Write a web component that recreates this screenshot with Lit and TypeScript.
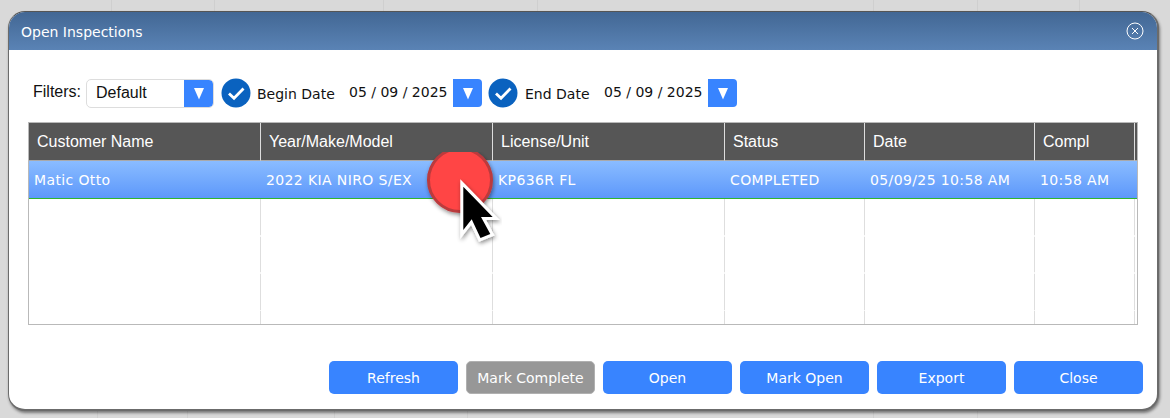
import { LitElement, html, css, svg } from "lit";
import { customElement } from "lit/decorators.js";

const COLS = [
  { name: "Customer Name", val: "Matic Otto" },
  { name: "Year/Make/Model", val: "2022 KIA NIRO S/EX" },
  { name: "License/Unit", val: "KP636R FL" },
  { name: "Status", val: "COMPLETED" },
  { name: "Date", val: "05/09/25 10:58 AM" },
  { name: "Compl", val: "10:58 AM" },
  { name: "", val: "" },
];
const BUTTONS = ["Refresh", "Mark Complete", "Open", "Mark Open", "Export", "Close"];
const check = svg`<svg class="check" width="30" height="30" viewBox="0 0 30 30"><circle cx="15" cy="15" r="14.5" fill="#0a62bf"/><path d="M8 15.5l5 4.8L22.5 10.5" fill="none" stroke="#fff" stroke-width="2.8"/></svg>`;

@customElement("app-root")
export class AppRoot extends LitElement {
  static styles = css`
    :host { display: block; width: 1170px; height: 418px; box-sizing: border-box; padding: 11px 11px 7px 8px; overflow: hidden; position: relative;
      background-color: #d9d9d9;
      font-family: "DejaVu Sans", sans-serif; }
    .bgline { position: absolute; width: 1px; background: #cfcfcf; }
    .top { top: 0; height: 11px; }
    .bot { top: 410px; height: 8px; }
    .modal { position: relative; box-sizing: border-box; height: 400px; background: #fff; border-radius: 17px; border: 1px solid #6b6b6b; border-top-color: #555; border-width: 1px 2px 2px 1px;
      box-shadow: 1px 2px 3px rgba(0,0,0,.45); overflow: hidden; display: flex; flex-direction: column; }
    .head { height: 38px; flex: none; box-sizing: border-box; padding: 0 13px 0 12px; display: flex; align-items: center; justify-content: space-between; background: linear-gradient(#426794, #5a83b5); color: #fff; font-size: 14px; }
    .title { position: relative; top: 1px; }
    .filters { display: flex; align-items: center; height: 30px; margin: 28px 0 0 24px; font-size: 14px; color: #111; }
    .flabel { font: 16px "Liberation Sans", sans-serif; width: 53px; flex: none; position: relative; top: -1px; color: #111; white-space: nowrap; }
    .select { box-sizing: border-box; width: 128px; height: 29px; border: 1px solid #ddd; border-radius: 5px; display: flex; justify-content: space-between; font: 16px "Liberation Sans", sans-serif; overflow: hidden; margin-right: 7px; flex: none; }
    .select span { padding: 4px 0 0 9px; }
    .drop { width: 29px; height: 28px; flex: none; background: #3884ff; display: flex; align-items: center; justify-content: center; border-radius: 0 4px 4px 0; }
    .select .drop { height: 27px; }
    .check { display: block; flex: none; margin-right: 6px; }
    .lbl { position: relative; top: 1px; white-space: nowrap; flex: none; }
    .l1 { width: 92px; }
    .l2 { width: 80px; padding-left: 1px; box-sizing: border-box; }
    .date { width: 104px; flex: none; position: relative; top: -1px; white-space: nowrap; }
    .drop.d2 { margin-right: 6px; }
    .table { position: relative; box-sizing: border-box; width: 1110px; height: 203px; margin: 14px 0 0 19px; border: 1px solid #b9b9b9; display: grid; grid-template-columns: 232px 232px 232px 140px 170px 100px 2px; grid-template-rows: 38px 38px 1fr; }
    .th { background: #565656; color: #fff; font: 16px "Liberation Sans", sans-serif; padding: 10px 0 0 8px; box-sizing: border-box; border-right: 1px solid #ddd; white-space: nowrap; overflow: hidden; border-bottom: 1px solid #a9a9a9; min-width: 0; }
    .th.end { border-right: none; padding: 0; }
    .td { background: linear-gradient(#8abcff, #5d98fb); color: #fff; font-size: 14px; letter-spacing: .38px; padding: 11px 0 0 5px; box-sizing: border-box; border-bottom: 1px solid #2fb52f; white-space: nowrap; min-width: 0; overflow: hidden; }
    .td.end { padding: 0; }
    .cell { background: repeating-linear-gradient(#dedede 0 36px, #f6f6f6 36px 37.5px) right top / 1px 100% no-repeat; }
    .cell.end { background: none; }
    .foot { display: flex; justify-content: flex-end; gap: 8px; margin: 36px 14px 0 0; }
    .btn { box-sizing: border-box; width: 129px; height: 33px; background: #3884ff; border-radius: 5px; color: #fff; font-size: 14px; display: flex; align-items: center; justify-content: center; }
    .btn.off { background: #979797; border: 1px solid #b0b0b0; color: #fff; }
    .cursor { position: absolute; left: 420px; top: 152px; }
  `;

  private drop(cls = "") {
    return html`<div class="drop ${cls}"><svg width="12" height="13" viewBox="0 0 12 13"><path d="M1 1h10L6 12.5z" fill="#fff"/></svg></div>`;
  }

  render() {
    const lefts = [111, 214, 383, 537, 873, 977, 1079];
    const botLefts = [97, 187, 334, 467, 873, 977];
    return html`
      ${lefts.map((x) => html`<div class="bgline top" style="left:${x}px"></div>`)}
      ${botLefts.map((x) => html`<div class="bgline bot" style="left:${x}px"></div>`)}
      <div class="modal">
        <div class="head">
          <span class="title">Open Inspections</span>
          <svg width="18" height="18" viewBox="0 0 18 18"><circle cx="9" cy="9" r="8" fill="none" stroke="#fff" stroke-width="1"/><path d="M6 6l6 6M12 6l-6 6" stroke="#fff" stroke-width="1"/></svg>
        </div>
        <div class="filters">
          <span class="flabel">Filters:</span>
          <div class="select"><span>Default</span>${this.drop()}</div>
          ${check}
          <span class="lbl l1">Begin Date</span>
          <span class="date">05 / 09 / 2025</span>
          ${this.drop("d2")}
          ${check}
          <span class="lbl l2">End Date</span>
          <span class="date">05 / 09 / 2025</span>
          ${this.drop()}
        </div>
        <div class="table">
          ${COLS.map((c, i) => html`<div class="th ${i === 6 ? "end" : ""}">${c.name}</div>`)}
          ${COLS.map((c, i) => html`<div class="td ${i === 6 ? "end" : ""}">${c.val}</div>`)}
          ${COLS.map((_, i) => html`<div class="cell ${i === 6 ? "end" : ""}"></div>`)}
        </div>
        <div class="foot">
          ${BUTTONS.map((b) => html`<div class="btn ${b === "Mark Complete" ? "off" : ""}">${b}</div>`)}
        </div>
      </div>
      <svg class="cursor" width="90" height="96" viewBox="0 0 90 96">
        <defs><filter id="s" x="-30%" y="-30%" width="160%" height="160%"><feDropShadow dx="1" dy="2" stdDeviation="2" flood-color="#000" flood-opacity=".45"/></filter></defs>
        <circle cx="40" cy="28" r="31.5" fill="#ff4545" stroke="#bb3a3d" stroke-width="3" filter="url(#s)"/>
        <path d="M43.3 34.7L72.7 65H61L70.3 82L60.5 86L51.7 67.3L43.3 78Z" fill="#000" stroke="#fff" stroke-width="6" stroke-linejoin="miter" paint-order="stroke" filter="url(#s)"/>
      </svg>
    `;
  }
}
